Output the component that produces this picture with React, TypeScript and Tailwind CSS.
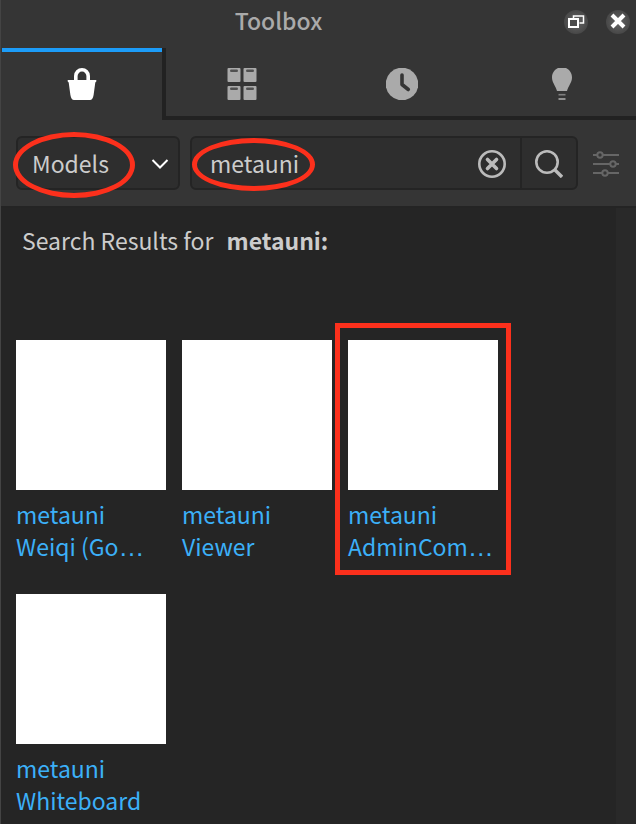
import React, { useState } from 'react';

type Model = { name: string; cut?: boolean; marked?: boolean };

const MODELS: Model[] = [
  { name: 'Weiqi (Go', cut: true },
  { name: 'Viewer' },
  { name: 'AdminCom', cut: true, marked: true },
  { name: 'Whiteboard' },
];

function BagIcon() {
  return (
    <svg width="32" height="32" viewBox="0 0 32 32" aria-hidden="true">
      <path d="M9.800 14V8a6.200 6.200 0 0 1 12.400 0v6" fill="none" stroke="#fff" strokeWidth="3.600" />
      <path d="M1.700 12h28.600v1.500l-1 1L27.600 27c-.6 3.200-1.700 5-3.600 5H8c-1.900 0-3-1.800-3.600-5L2.700 14.500l-1-1Z" fill="#fff" />
    </svg>
  );
}

function DrawersIcon() {
  return (
    <svg width="32" height="32" viewBox="0 0 32 32" aria-hidden="true">
      {[0, 18].map((y) =>
        [1.5, 17.5].map((x) => (
          <g key={`${x}-${y}`}>
            <rect x={x} y={y} width="13" height="14" rx="1" fill="#aaa" />
            <rect x={x + 2.5} y={y + 1.5} width="8" height="2.6" rx="1.3" fill="#505050" />
          </g>
        )),
      )}
    </svg>
  );
}

function ClockIcon() {
  return (
    <svg width="32" height="32" viewBox="0 0 32 32" aria-hidden="true">
      <circle cx="16" cy="16" r="16.300" fill="#aaa" />
      <path d="M16 7v9.500l6.300 5" fill="none" stroke="#353535" strokeWidth="3.600" strokeLinecap="round" strokeLinejoin="round" />
    </svg>
  );
}

function BulbIcon() {
  return (
    <svg width="32" height="32" viewBox="0 0 32 32" aria-hidden="true">
      <path d="M12 0h8c3.500 1.500 6 5 6 9.500 0 5-3.500 8-5 13.500H11C9.500 17.500 6 14.500 6 9.500 6 5 8.500 1.500 12 0Z" fill="#aaa" />
      <path d="M12.500 26.700h7" stroke="#808080" strokeWidth="1.600" />
      <path d="M12.500 31h7" stroke="#aaa" strokeWidth="1.600" />
    </svg>
  );
}

function Ring({ className }: { className: string }) {
  return <span aria-hidden="true" className={`pointer-events-none absolute rounded-[50%] border-5 border-[#fc301c] ${className}`} />;
}

const TABS = [
  { label: 'Marketplace', Icon: BagIcon },
  { label: 'Inventory', Icon: DrawersIcon },
  { label: 'Recent', Icon: ClockIcon },
  { label: 'Creations', Icon: BulbIcon },
];

export default function App() {
  const [query, setQuery] = useState('metauni');
  const [tab, setTab] = useState(0);

  return (
    <div className="flex min-h-screen flex-col border-l border-[#444] bg-[#353535] font-['Noto_Sans_CJK_SC',sans-serif] text-[23px] leading-8 text-[#ccc]">
      <header className="flex h-12 items-center pb-1 pr-1.5">
        <h1 className="flex-1 pb-1 pr-2 text-center font-medium text-[#aaa]">Toolbox</h1>
        <div className="flex gap-[18px]">
          <button aria-label="Undock" className="size-6 rounded-full bg-[radial-gradient(circle,#666_0%,#4c4c4c_60%,#3c3c3c_100%)]">
            <svg width="24" height="24" viewBox="0 0 24 24" fill="none" stroke="#fff" aria-hidden="true">
              <path d="M9.500 9V6h10v7h-4" strokeWidth="1.500" />
              <rect x="5" y="9" width="9" height="8" strokeWidth="2" fill="#4c4c4c" />
            </svg>
          </button>
          <button aria-label="Close" className="size-6 rounded-full bg-[radial-gradient(circle,#666_0%,#4c4c4c_60%,#3c3c3c_100%)]">
            <svg width="24" height="24" viewBox="0 0 24 24" fill="none" stroke="#fff" strokeWidth="4" aria-hidden="true">
              <path d="m6 5 12 12M18 5 6 17" />
            </svg>
          </button>
        </div>
      </header>

      <nav className="flex h-18 overflow-hidden pl-px" aria-label="Toolbox sections">
        {TABS.map(({ label, Icon }, i) => (
          <button
            key={label}
            aria-label={label}
            onClick={() => setTab(i)}
            className={`flex min-w-40 flex-1 items-center justify-center ${
              i === tab
                ? 'border-t-4 border-[#1c9cf8] pb-1 shadow-[4px_0_0_#222]'
                : 'border-b-4 border-[#222] pt-1'
            }`}
          >
            <Icon />
          </button>
        ))}
      </nav>

      <form className="flex h-[86px] items-center pl-[15px] pr-3" onSubmit={(e) => e.preventDefault()}>
        <div className="relative h-[54px] w-[164px]">
          <select
            aria-label="Category"
            defaultValue="Models"
            className="size-full appearance-none rounded-md border-2 border-[#242424] bg-[#2e2e2e] pl-3.5 text-[#ccc]"
          >
            <option>Models</option>
          </select>
          <svg width="18" height="10" viewBox="0 0 18 10" className="pointer-events-none absolute right-[11px] top-[23px]" fill="none" stroke="#fff" strokeWidth="2" aria-hidden="true">
            <path d="m1.500 1 7.500 7.500L16.500 1" />
          </svg>
          <Ring className="-left-[3px] -top-1 h-[66px] w-[122px]" />
        </div>

        <div className="relative ml-2.5 flex h-[54px] flex-1 items-center rounded-md border-2 border-[#242424] bg-[#2e2e2e]">
          <input
            aria-label="Search"
            value={query}
            onChange={(e) => setQuery(e.target.value)}
            className="h-full min-w-0 flex-1 bg-transparent pl-[18px] text-[#ccc] outline-none"
          />
          <button type="button" aria-label="Clear" onClick={() => setQuery('')} className="mr-3.5">
            <svg width="28" height="30" viewBox="0 -2 28 30" fill="none" stroke="#bbb" aria-hidden="true">
              <circle cx="14" cy="14" r="12.700" strokeWidth="2.600" />
              <path d="m9.500 9.500 9 9m0-9-9 9" strokeWidth="3.600" strokeLinecap="round" />
            </svg>
          </button>
          <button aria-label="Run search" className="flex h-full w-14 items-center justify-center border-l-2 border-[#242424]">
            <svg width="28" height="30" viewBox="0 -2 28 30" fill="none" stroke="#bbb" aria-hidden="true">
              <circle cx="12" cy="12" r="10.700" strokeWidth="2.600" />
              <path d="m19.500 19.500 7.500 7.500" strokeWidth="3.400" />
            </svg>
          </button>
          <Ring className="left-0 top-0 h-[53px] w-[123px]" />
        </div>

        <button type="button" aria-label="Filters" className="ml-3.5">
          <svg width="32" height="30" viewBox="0 -2 32 30" fill="none" stroke="#666" strokeWidth="2" aria-hidden="true">
            <path d="M1 5h26M1 14h26M1 23h26" />
            <g fill="#353535">
              <circle cx="8" cy="5" r="2.700" />
              <circle cx="21" cy="14" r="2.700" />
              <circle cx="13" cy="23" r="2.700" />
            </g>
          </svg>
        </button>
      </form>

      <div className="flex flex-1 border-t-2 border-[#242424] bg-[#252525]">
        <main className="flex-1">
          <h2 className="pl-[21px] pt-4">
            Search Results for <strong className="ml-2 font-bold">metauni:</strong>
          </h2>
          <ul className="flex flex-wrap gap-x-4 gap-y-[30px] pl-[15px] pt-[84px]">
            {MODELS.map((m) => (
              <li key={m.name} className="relative w-[150px]">
                <div className="h-[150px] bg-white" />
                <a href="#model" className="block whitespace-nowrap pb-0.5 pt-2 text-[#3cb0f8]">
                  metauni
                  <br />
                  {m.name}
                  {m.cut && <span className="font-['Liberation_Sans',sans-serif] text-[26px] leading-none">…</span>}
                </a>
                {m.marked && (
                  <span aria-hidden="true" className="pointer-events-none absolute -bottom-[11px] -left-[13px] -right-[13px] -top-[17px] border-5 border-[#fc301c]" />
                )}
              </li>
            ))}
          </ul>
        </main>
        <div className="w-5 bg-[#292929]" />
      </div>
    </div>
  );
}
